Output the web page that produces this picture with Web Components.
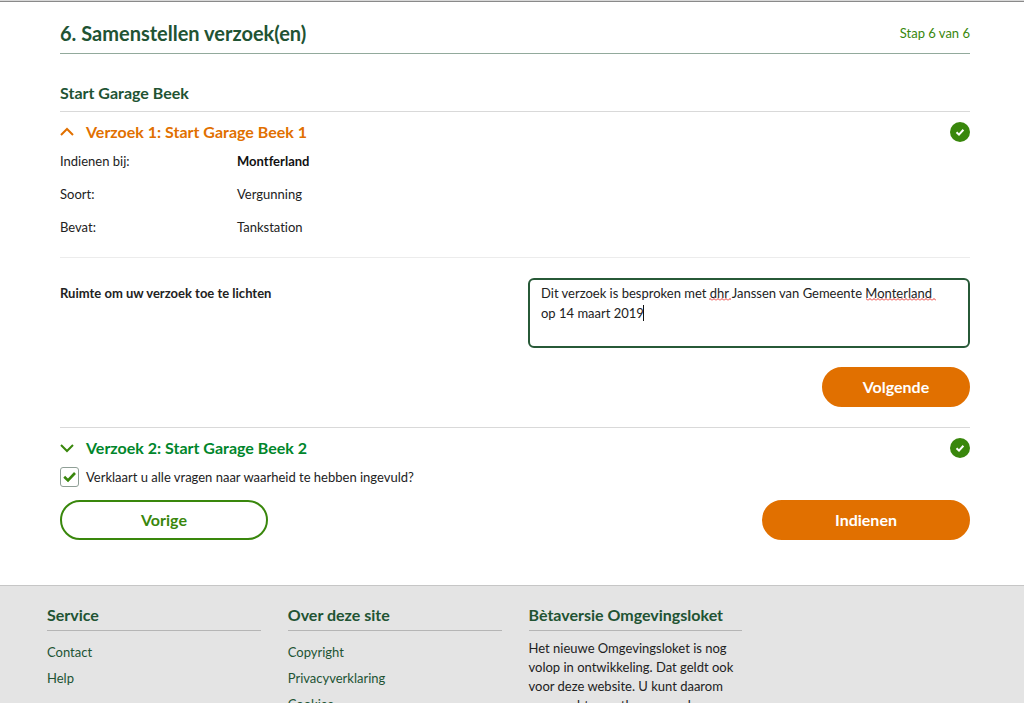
<!DOCTYPE html>
<html lang="nl">
<head>
<meta charset="utf-8">
<meta name="viewport" content="width=device-width, initial-scale=1">
<title>Omgevingsloket - Samenstellen verzoek(en)</title>
<style>
  body {
    margin: 0;
    background: #fff;
    color: #222;
    font: 13px/20px Lato, "Noto Sans", sans-serif;
    font-variant-ligatures: none;
    --dark: #215333;
    --green: #39870c;
    --orange: #e17000;
  }
</style>
</head>
<body>
<loket-page></loket-page>

<script>
const define = (name, html, setup) => {
  const template = document.createElement('template');
  template.innerHTML = html;
  customElements.define(name, class extends HTMLElement {
    constructor() {
      super();
      this.attachShadow({ mode: 'open' }).append(template.content.cloneNode(true));
    }
    connectedCallback() {
      if (setup) setup(this, this.shadowRoot);
    }
  });
};

define('step-header', `
  <style>
    :host { display: flex; justify-content: space-between; align-items: center;
      padding: 18px 0 7px; border-bottom: 1px solid #92aa9c; }
    h1 { margin: 0; font-size: 20px; line-height: 26px; color: var(--dark); }
    p { margin: 0; color: var(--green); }
  </style>
  <h1><slot></slot></h1>
  <p><slot name="step"></slot></p>`);

define('status-check', `
  <style>
    :host { display: block; width: 20px; height: 20px; }
    svg { display: block; }
  </style>
  <svg width="20" height="20" viewBox="0 0 20 20" role="img" aria-label="Compleet">
    <circle cx="10" cy="10" r="10" fill="#39870c"/>
    <path d="M6.5 10.2 9 12.6 13.4 7.8" fill="none" stroke="#fff" stroke-width="2"/>
  </svg>`);

define('request-panel', `
  <style>
    :host { display: block; border-top: 1px solid #d9d9d9; --tone: #00862b; }
    :host([open]) { --tone: var(--orange); }
    header { display: flex; justify-content: space-between; align-items: center; height: 39px; }
    h3 { margin: 0; }
    button { display: flex; align-items: center; gap: 12px; border: 0; padding: 0;
      background: none; font: inherit; font-weight: bold; font-size: 16px; color: var(--tone); cursor: pointer; }
    svg { fill: none; stroke: var(--green); stroke-width: 2; }
    :host([open]) svg { stroke: var(--orange); transform: rotate(180deg); }
    .body { display: none; }
    :host([open]) .body { display: block; }
  </style>
  <header>
    <h3><button type="button">
      <svg width="14" height="10" viewBox="0 0 14 10" aria-hidden="true"><path d="M1 2 7 8 13 2"/></svg>
      <slot name="title"></slot>
    </button></h3>
    <status-check></status-check>
  </header>
  <div class="body"><slot></slot></div>`,
  (host, root) => {
    const button = root.querySelector('button');
    button.setAttribute('aria-expanded', host.hasAttribute('open'));
    button.onclick = () => button.setAttribute('aria-expanded', host.toggleAttribute('open'));
  });

define('request-facts', `
  <style>
    :host { display: block; border-bottom: 1px solid #ececec; padding-bottom: 20px; }
    dl { margin: 0; display: grid; grid-template-columns: 177px 1fr; row-gap: 13px; }
    dd { margin: 0; }
    .strong { font-weight: bold; color: #111; }
  </style>
  <dl>
    <dt>Indienen bij:</dt><dd class="strong">Montferland</dd>
    <dt>Soort:</dt><dd>Vergunning</dd>
    <dt>Bevat:</dt><dd>Tankstation</dd>
  </dl>`);

define('note-field', `
  <style>
    :host { display: grid; grid-template-columns: 468px 1fr; padding-top: 20px; }
    label { padding-top: 5px; font-weight: bold; }
    .field { position: relative; display: grid; }
    textarea { box-sizing: border-box; height: 70px; margin: 0; padding: 3px 22px 3px 11px; resize: none;
      border: 2px solid #275937; border-radius: 6px; background: #fff; outline: 0; overflow: hidden;
      font: inherit; color: inherit; }
    .marks { position: absolute; top: 0; left: 0; pointer-events: none; }
  </style>
  <label for="note">Ruimte om uw verzoek toe te lichten</label>
  <div class="field">
    <textarea id="note" spellcheck="false">Dit verzoek is besproken met dhr Janssen van Gemeente Monterland op 14 maart 2019</textarea>
    <svg class="marks" width="430" height="50" aria-hidden="true">
      <defs><pattern id="wave" width="4" height="3" y="20" patternUnits="userSpaceOnUse">
        <path d="M0 2.5 2 .5 4 2.5" fill="none" stroke="#e5322d"/></pattern></defs>
      <rect x="181" y="20" width="22" height="3" fill="url(#wave)"/>
      <rect x="338" y="20" width="70" height="3" fill="url(#wave)"/>
      <rect x="115" y="27" width="1" height="16" fill="#111"/>
    </svg>
  </div>`);

define('pill-button', `
  <style>
    :host { display: block; width: 208px; }
    :host([size="small"]) { width: 148px; }
    button { box-sizing: border-box; width: 100%; height: 40px; border: 2px solid var(--orange);
      border-radius: 20px; padding: 0; background: var(--orange); color: #fff;
      font: inherit; font-weight: bold; font-size: 16px; cursor: pointer; }
    :host([kind="outline"]) button { background: #fff; border-color: var(--green); color: var(--green); }
  </style>
  <button type="button"><slot></slot></button>`);

define('confirm-check', `
  <style>
    :host { display: block; }
    label { display: flex; align-items: center; gap: 7px; height: 20px; }
    input { appearance: none; box-sizing: border-box; width: 19px; height: 20px; margin: 0;
      border: 1px solid #8f9f96; border-radius: 3px; background: #fff; }
    input:checked { background: url('data:image/svg+xml,<svg xmlns="http://www.w3.org/2000/svg" viewBox="0 0 17 18"><path d="M3.200 8.800 7 12.500 14 5" fill="none" stroke="%2339870c" stroke-width="2.600"/></svg>') center / 17px 18px no-repeat; }
  </style>
  <label><input type="checkbox" checked><slot></slot></label>`);

define('footer-column', `
  <style>
    :host { display: block; }
    h2 { margin: 0; padding-bottom: 5px; border-bottom: 1px solid #b5b5b5;
      font-size: 16px; line-height: 20px; color: var(--dark); }
    .body { padding-top: 8px; }
  </style>
  <h2><slot name="title"></slot></h2>
  <div class="body"><slot></slot></div>`);

define('footer-link', `
  <style>
    :host { display: block; padding: 3px 0; }
    a { color: var(--dark); text-decoration: none; }
    a:hover { text-decoration: underline; }
  </style>
  <a href="#"><slot></slot></a>`);

define('site-footer', `
  <style>
    :host { display: grid; grid-template-columns: repeat(4, 1fr); column-gap: 27px;
      padding: 19px 41px 24px 47px; border-top: 1px solid #c6c6c6; background: #e4e4e4; }
    p { margin: 0; line-height: 19px; }
  </style>
  <footer-column><span slot="title">Service</span>
    <footer-link>Contact</footer-link><footer-link>Help</footer-link>
  </footer-column>
  <footer-column><span slot="title">Over deze site</span>
    <footer-link>Copyright</footer-link><footer-link>Privacyverklaring</footer-link><footer-link>Cookies</footer-link>
  </footer-column>
  <footer-column><span slot="title">Bètaversie Omgevingsloket</span>
    <p>Het nieuwe Omgevingsloket is nog volop in ontwikkeling. Dat geldt ook voor deze website. U kunt daarom geen rechten ontlenen aan de</p>
  </footer-column>`);

define('loket-page', `
  <style>
    :host { display: block; border-top: 1px solid #d8d8d8; }
    main { padding: 0 54px 45px 60px; border-top: 1px solid #8a8a8a; }
    h2 { margin: 0; padding: 29px 0 8px; font-size: 16px; line-height: 20px; color: var(--dark); }
    .next { display: flex; justify-content: flex-end; padding: 19px 0 20px; }
    .actions { display: flex; justify-content: space-between; padding-top: 13px; }
  </style>
  <main>
    <step-header>6. Samenstellen verzoek(en)<span slot="step">Stap 6 van 6</span></step-header>
    <h2>Start Garage Beek</h2>
    <request-panel open>
      <span slot="title">Verzoek 1: Start Garage Beek 1</span>
      <request-facts></request-facts>
      <note-field></note-field>
      <div class="next"><pill-button size="small">Volgende</pill-button></div>
    </request-panel>
    <request-panel><span slot="title">Verzoek 2: Start Garage Beek 2</span></request-panel>
    <confirm-check>Verklaart u alle vragen naar waarheid te hebben ingevuld?</confirm-check>
    <div class="actions">
      <pill-button kind="outline">Vorige</pill-button>
      <pill-button>Indienen</pill-button>
    </div>
  </main>
  <site-footer></site-footer>`);
</script>
</body>
</html>
